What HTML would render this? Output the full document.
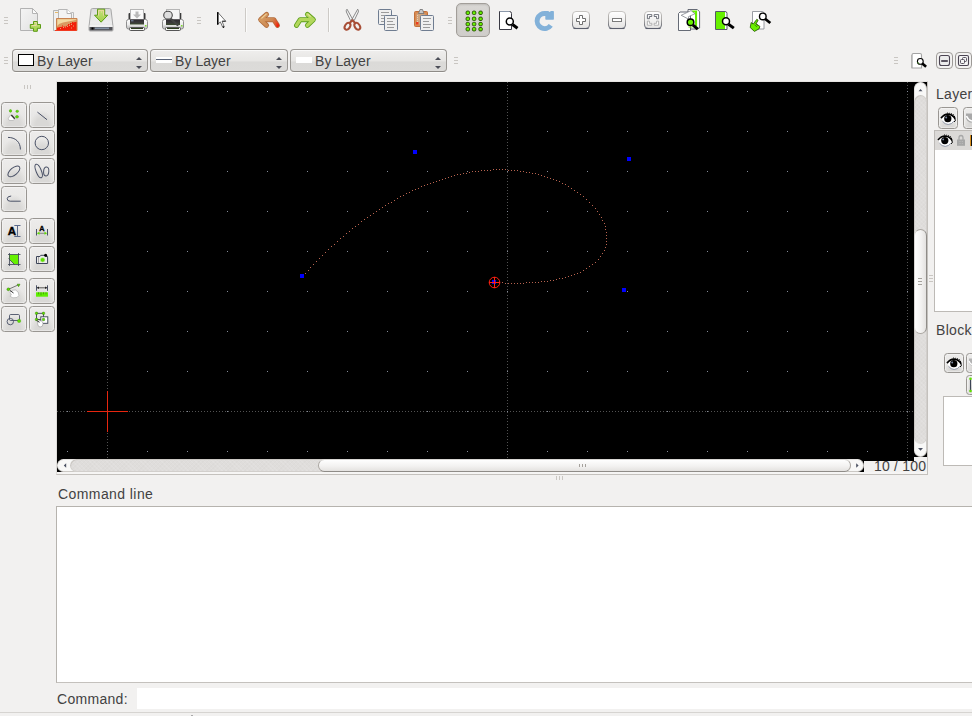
<!DOCTYPE html>
<html><head><meta charset="utf-8"><title>LibreCAD</title>
<style>
*{box-sizing:border-box;margin:0;padding:0}
html,body{width:972px;height:716px;overflow:hidden;background:#f2f1f0}
body{position:relative;font-family:"Liberation Sans",sans-serif;font-size:14px;color:#424242}
.a{position:absolute}
.t{position:absolute;white-space:nowrap;line-height:16px;letter-spacing:.3px}
/* generic raised button */
.b{position:absolute;border:1px solid #999692;border-radius:3.500px;background:radial-gradient(ellipse 50% 68% at 50% 100%,#d9d8d6 55%,rgba(217,216,214,0) 100%),linear-gradient(#edeceb,#e4e3e1);box-shadow:inset 0 0 0 1px rgba(255,255,255,.35)}
.hd{position:absolute;width:4px;height:8px;background:linear-gradient(#c9c6c2 0 0) 0 0/5px 1px no-repeat,linear-gradient(#c9c6c2 0 0) 0 3px/5px 1px no-repeat,linear-gradient(#c9c6c2 0 0) 0 6px/5px 1px no-repeat}
.vd{position:absolute;width:8px;height:5px;background:linear-gradient(#c9c6c2 0 0) 0 0/1px 5px no-repeat,linear-gradient(#c9c6c2 0 0) 3px 0/1px 5px no-repeat,linear-gradient(#c9c6c2 0 0) 6px 0/1px 5px no-repeat}
.cb{position:absolute;top:49px;height:23px;border:1px solid #9a9793;border-bottom-color:#8e8b87;border-radius:4px;background:linear-gradient(#efeeed,#e7e6e4 50%,#dbdad8 58%,#dcdbd9);box-shadow:inset 0 1px 0 rgba(255,255,255,.7),0 1px 0 #fbfbfa}
.cb span{position:absolute;top:3px;line-height:16px;letter-spacing:.05px}
.cb i{position:absolute;right:5.500px;width:0;height:0;border-left:3px solid transparent;border-right:3px solid transparent}
.cb i.u{top:6.500px;border-bottom:3.600px solid #4c4e58}
.cb i.d{top:15.500px;border-top:3.600px solid #4c4e58}
svg{position:absolute;overflow:visible}
</style></head><body>

<!-- ===== top toolbar ===== -->
<div class="hd" style="left:4px;top:17px"></div>
<div class="hd" style="left:197px;top:17px"></div>
<div class="hd" style="left:448px;top:17px"></div>
<div class="a" style="left:245px;top:8px;width:1px;height:24px;background:#cdcac6"></div>
<div class="a" style="left:246px;top:8px;width:1px;height:24px;background:#fbfbfa"></div>
<div class="a" style="left:328px;top:8px;width:1px;height:24px;background:#cdcac6"></div>
<div class="a" style="left:329px;top:8px;width:1px;height:24px;background:#fbfbfa"></div>
<div class="a" style="left:456px;top:3px;width:34px;height:34px;border:1px solid #a29e99;border-radius:5px;background:linear-gradient(#d9d7d4,#cfcdca);box-shadow:inset 0 1px 2px rgba(0,0,0,.12)"></div>
<svg style="left:0;top:0" width="972" height="40" viewBox="0 0 972 40">
<defs>
<linearGradient id="pg" x1="0" y1="0" x2="1" y2="1"><stop offset="0" stop-color="#f4f4f4"/><stop offset="1" stop-color="#e2e2e2"/></linearGradient>
<linearGradient id="gr" x1="0" y1="0" x2="0" y2="1"><stop offset="0" stop-color="#c3e27a"/><stop offset="1" stop-color="#a3d04a"/></linearGradient>
<linearGradient id="fo" x1="0" y1="0" x2="0" y2="1"><stop offset="0" stop-color="#f3dfa8"/><stop offset=".35" stop-color="#e5b074"/><stop offset=".55" stop-color="#dc8a55"/><stop offset=".8" stop-color="#ee3a1c"/><stop offset="1" stop-color="#f41d0c"/></linearGradient>
<linearGradient id="dr" x1="0" y1="0" x2="0" y2="1"><stop offset="0" stop-color="#dadada"/><stop offset=".6" stop-color="#ededed"/><stop offset="1" stop-color="#e0e0e0"/></linearGradient>
<linearGradient id="pr" x1="0" y1="0" x2="0" y2="1"><stop offset="0" stop-color="#fdfdfd"/><stop offset=".55" stop-color="#ececec"/><stop offset=".72" stop-color="#d2d2d2"/><stop offset="1" stop-color="#c4c4c4"/></linearGradient>
<linearGradient id="ud" x1="0" y1="0" x2="1" y2="0"><stop offset="0" stop-color="#dba466"/><stop offset=".6" stop-color="#cf8553"/><stop offset=".8" stop-color="#e2502c"/><stop offset="1" stop-color="#f41d0c"/></linearGradient>
<linearGradient id="zb" x1="0" y1="0" x2="0" y2="1"><stop offset="0" stop-color="#ffffff"/><stop offset="1" stop-color="#e4e3e2"/></linearGradient>
<linearGradient id="ud2" gradientUnits="userSpaceOnUse" x1="258" y1="14" x2="280" y2="26"><stop offset="0" stop-color="#d9a468"/><stop offset=".62" stop-color="#cc8752"/><stop offset=".8" stop-color="#e2552c"/><stop offset=".92" stop-color="#f41d0c"/></linearGradient>
<linearGradient id="zs" x1="0" y1="0" x2="0" y2="1"><stop offset="0" stop-color="#c6c4c1"/><stop offset=".5" stop-color="#a9a7a5"/><stop offset="1" stop-color="#5a5e6c"/></linearGradient>
<linearGradient id="sl" x1="0" y1="0" x2="0" y2="1"><stop offset="0" stop-color="#2f2a31"/><stop offset=".6" stop-color="#3a3a3a"/><stop offset="1" stop-color="#3c4c2e"/></linearGradient>
</defs>
<!-- new -->
<g>
<path d="M20.5 8.5h12l5 5v17h-17z" fill="url(#pg)" stroke="#b2b2b2"/>
<path d="M32.5 8.5v5h5z" fill="#fbfbfb" stroke="#b4b4b4" stroke-linejoin="round"/>
<path d="M33.500 21.500h3.800v3h3.200v3.800h-3.200v3h-3.800v-3h-3.200v-3.800h3.200z" fill="url(#gr)" stroke="#5c9c14" stroke-linejoin="round"/>
<path d="M34.500 22.500h1.800v3h-4.500" fill="none" stroke="#ecd6a6" stroke-width="1"/>
</g>
<!-- open -->
<g>
<path d="M53.500 10.500h5.500v20h-5.500z" fill="#f0f0f0" stroke="#b4b4b4"/>
<path d="M55 12.500h3" stroke="#e5b96a"/>
<path d="M71.500 12.500h2v18h-2z" fill="#f2f2f2" stroke="#bababa"/>
<path d="M58.500 9.500h8.500l4.500 4v17h-13z" fill="#f3f3f3" stroke="#b6b6b6"/>
<path d="M67 9.500v4h4.500" fill="#fff" stroke="#b4b4b4"/>
<path d="M56.500 18.500h20.500v12h-20.500z" fill="#da9a62" stroke="#c98250"/>
<path d="M57.300 19.300h18.900v.5l-4.200.9l-4 .9l-5 1l-4 1.400l-1.700 2z" fill="#f1dba4"/>
<path d="M57 30.300v-2.500l3-.8l3-.3l3-.5l4-2l3-1.600l3.500-.8v8.500z" fill="#f21e0a"/>
<g fill="#f21e0a"><rect x="68" y="24" width="1" height="1"/><rect x="70" y="23" width="1" height="1"/><rect x="72" y="22" width="1" height="1"/><rect x="62" y="25.500" width="1" height="1"/></g>
<g fill="#e9a070"><rect x="63" y="27" width="1" height="1"/><rect x="65" y="26.500" width="1" height="1"/><rect x="67" y="26" width="1" height="1"/><rect x="69" y="25" width="1" height="1"/><rect x="71" y="24" width="1" height="1"/><rect x="73" y="25.500" width="1" height="1"/><rect x="71" y="27.500" width="1" height="1"/><rect x="60" y="28" width="1" height="1"/></g>
<path d="M55 30.500h21.500" stroke="#f23a20" stroke-width="1"/>
</g>
<!-- save / drive -->
<g>
<path d="M93 8.500h16.500q1.300 0 1.500 1.200l2 16.800v3.500q0 1-1 1h-22q-1 0-1-1v-3.500l2-16.800q.2-1.200 1.500-1.200z" fill="url(#dr)" stroke="#a9a9a9"/>
<path d="M89.500 27h23v2.700q0 .8-.8.800h-21.400q-.8 0-.8-.800z" fill="#55555a"/>
<path d="M89.500 26h23" stroke="#fafafa"/>
<rect x="91.500" y="27.500" width="2" height="2" fill="#000"/>
<path d="M95 28.300h14" stroke="#8593a5" stroke-width="1.600"/>
<path d="M97.500 9.200h7.200v6h3l-6.600 7l-6.600-7h3z" fill="url(#gr)" stroke="#5c9c14" stroke-linejoin="round"/>
<path d="M98.600 15.600v-5.300h5v5.300" fill="none" stroke="#f0d7a0" stroke-width="1"/><rect x="101" y="11.500" width="1" height="1" fill="#f0d7a0"/>
</g>
<!-- print -->
<g>
<rect x="128.500" y="13" width="17" height="8" rx="1" fill="#3a3a3a"/>
<rect x="130.500" y="9.500" width="13" height="11" fill="#fafafa" stroke="#b5b5b5"/>
<path d="M135.500 11.500h3v3h2.500l-4 4l-4-4h2.500z" fill="#b9b9b9"/>
<rect x="126.500" y="19.500" width="21" height="9.500" rx="2" fill="url(#pr)" stroke="#8e8e8e"/>
<rect x="130" y="19.500" width="14" height="5" fill="url(#sl)"/>
<path d="M131 20.800h2.500" stroke="#8190ae" stroke-width="1"/>
<rect x="129.500" y="27.500" width="15" height="3" rx="1" fill="#f4f4f4" stroke="#555"/>
<path d="M131 28.500h12" stroke="#2c3d1c" stroke-width="1"/>
<rect x="145" y="25" width="1.500" height="1.500" fill="#7be02a"/>
</g>
<!-- print preview -->
<g>
<rect x="176" y="13" width="5.300" height="8" fill="#3a3a3a"/>
<rect x="166.500" y="9.500" width="13" height="11" fill="#f6f6f6" stroke="#b5b5b5"/>
<rect x="162.500" y="19.500" width="21" height="9.500" rx="2" fill="url(#pr)" stroke="#8e8e8e"/>
<rect x="166" y="19.500" width="14" height="5.500" fill="url(#sl)"/>
<rect x="165.500" y="27.500" width="15" height="3" rx="1" fill="#f4f4f4" stroke="#555"/>
<path d="M167 28.500h12" stroke="#2c3d1c" stroke-width="1"/>
<rect x="181" y="25" width="1.500" height="1.500" fill="#7be02a"/>
<path d="M171 19l6.500 6" stroke="#444" stroke-width="2.200" stroke-linecap="round"/>
<ellipse cx="168" cy="15.200" rx="4.300" ry="3.900" fill="#dedede" stroke="#4a4a4a" stroke-width="1.100"/>
</g>
<!-- cursor -->
<path d="M217.500 12v12.800l2.800-3l2.400 5.400q.9.600 1.500-.3l-2.100-5.600h3.700z" fill="#fff" stroke="#3a3a3a" stroke-width=".7" stroke-linejoin="round"/><path d="M222.300 21.200h3.300" stroke="#222" stroke-width=".9"/><circle cx="223.500" cy="27.100" r=".8" fill="#000"/>
<path d="M217.800 12.300v12.200" stroke="#000" stroke-width="1.500"/>
<!-- undo -->
<g fill="none" stroke-linecap="round" stroke-linejoin="round">
<path d="M266.600 14.400L260.600 19.700L266.600 25.400M262 19.700H273.800L277.500 25.400" stroke="#b26d3c" stroke-width="4.900"/>
<path d="M266.600 14.400L260.600 19.700L266.600 25.400M262 19.700H273.800L277.500 25.400" stroke="url(#ud2)" stroke-width="3.300"/>
<path d="M266.200 14.200L261.800 18.100" stroke="#f0d49a" stroke-width="1.100"/>
</g>
<!-- redo -->
<g fill="none" stroke-linecap="round" stroke-linejoin="round">
<path d="M307.400 14.400L313.400 19.700L307.400 25.400M312 19.700H300.200L296.500 25.400" stroke="#5e9f1c" stroke-width="4.900"/>
<path d="M307.400 14.400L313.400 19.700L307.400 25.400M312 19.700H300.200L296.500 25.400" stroke="#b3d75c" stroke-width="3.300"/>
<path d="M307.800 14.200L310.300 16.400" stroke="#e4dfa0" stroke-width="1.100"/>
</g>
<!-- cut -->
<g>
<path d="M347 9.200q-1.200 1.300-.6 2.800l4.100 8.500l2 -1.500z" fill="#f4f4f4" stroke="#707070" stroke-linejoin="round" stroke-width=".8"/>
<path d="M357.700 9.200q1.200 1.300 .6 2.800l-4.100 8.500l-2 -1.500z" fill="#f4f4f4" stroke="#707070" stroke-linejoin="round" stroke-width=".8"/>
<ellipse cx="347.500" cy="26.300" rx="2.500" ry="3.700" fill="none" stroke="#a84e36" stroke-width="2" transform="rotate(32 347.500 26.300)"/>
<ellipse cx="357.300" cy="26.300" rx="2.500" ry="3.700" fill="none" stroke="#a84e36" stroke-width="2" transform="rotate(-32 357.300 26.300)"/>
<path d="M349.300 23.300l3.100-3l3.100 3" fill="none" stroke="#a84e36" stroke-width="2.200" stroke-linejoin="round"/>
</g>
<!-- copy -->
<g>
<rect x="378.500" y="9.500" width="13" height="15" rx="1" fill="#efefef" stroke="#6f7d91"/>
<path d="M381 12.500h8M381 15.500h6M381 18.500h7M381 21.500h5" stroke="#9b9b9b"/>
<rect x="384.500" y="15.500" width="13" height="15" rx="1" fill="#efefef" stroke="#6f7d91"/>
<path d="M387 18.500h8M387 21.500h6M387 24.500h8M387 27.500h7" stroke="#9b9b9b"/>
</g>
<!-- paste -->
<g>
<rect x="414.500" y="11.500" width="13" height="15" rx="1" fill="#d98a50" stroke="#c2703a"/>
<rect x="416.500" y="13.500" width="9" height="11" fill="#cfa47e"/>
<path d="M417.500 15v9" stroke="#e8cdb2" stroke-dasharray="1 1"/>
<rect x="416" y="22" width="2.500" height="2.500" fill="#ef3a1c"/>
<path d="M418.500 13.500l1.500-4h2.500l1.500 4z" fill="#c9c9c9" stroke="#707070" stroke-width=".8"/>
<rect x="420.500" y="15.500" width="13" height="15" rx="1" fill="#efefef" stroke="#6f7d91"/>
<path d="M423 18.500h8M423 21.500h6M423 24.500h8M423 27.500h7" stroke="#9b9b9b"/>
</g>
<!-- grid -->
<g fill="#66f000" stroke="#2a5206" stroke-width="1">
<rect x="466.10" y="11.10" width="3.4" height="3.4" rx="1.1"/><rect x="472.40" y="11.10" width="3.4" height="3.4" rx="1.1"/><rect x="478.90" y="11.10" width="3.4" height="3.4" rx="1.1"/>
<rect x="466.10" y="17.10" width="3.4" height="3.4" rx="1.1"/><rect x="472.40" y="17.10" width="3.4" height="3.4" rx="1.1"/><rect x="478.90" y="17.10" width="3.4" height="3.4" rx="1.1"/>
<rect x="466.10" y="22.40" width="3.4" height="3.4" rx="1.1"/><rect x="472.40" y="22.40" width="3.4" height="3.4" rx="1.1"/><rect x="478.90" y="22.40" width="3.4" height="3.4" rx="1.1"/>
<rect x="466.10" y="27.50" width="3.4" height="3.4" rx="1.1"/><rect x="472.40" y="27.50" width="3.4" height="3.4" rx="1.1"/><rect x="478.90" y="27.50" width="3.4" height="3.4" rx="1.1"/>
</g>
<!-- zoom redraw -->
<g>
<path d="M499.500 11.500h10q2 0 2 2v16h-12z" fill="#fff" stroke="#3a3a44"/>
<path d="M500 11.500h9.500" stroke="#8b98aa"/>
<circle cx="509.800" cy="21.500" r="3.500" fill="#fff" stroke="#000" stroke-width="1.500"/>
<path d="M512.500 24.500l5 3.800" stroke="#000" stroke-width="3"/>
</g>
<!-- refresh -->
<path d="M552.800 26.700A10 10 0 1 1 546.300 11.100L548.300 11.100L549.500 12L551 11L553.200 11Q553.900 11 553.900 11.700L553.900 19Q553.900 19.700 553.200 19.700L546 19.700Q545.300 19.700 545.300 19L545.300 16.050A5 5 0 1 0 548.700 23.900Z" fill="#82b1d9"/>
<!-- zoom in -->
<g>
<rect x="572.500" y="11.500" width="17" height="17" rx="3.500" fill="url(#zb)" stroke="url(#zs)"/>
<path d="M573.500 28.500h15" stroke="#5a5e6c" stroke-width="1.100"/>
<path d="M579.500 15.500h3v3h3v3h-3v3h-3v-3h-3v-3h3z" fill="#fff" stroke="#6f6f6f"/>
</g>
<!-- zoom out -->
<g>
<rect x="608.500" y="11.500" width="17" height="17" rx="3.500" fill="url(#zb)" stroke="url(#zs)"/>
<path d="M609.500 28.500h15" stroke="#5a5e6c" stroke-width="1.100"/>
<rect x="612.500" y="18.500" width="9" height="3" fill="#fff" stroke="#7a7a7a"/>
</g>
<!-- zoom auto -->
<g>
<rect x="644.500" y="11.500" width="17" height="17" rx="3.500" fill="url(#zb)" stroke="url(#zs)"/>
<path d="M645.500 28.500h15" stroke="#5a5e6c" stroke-width="1.100"/>
<path d="M647.400 14.600h4.400v1.900h-2.400v2.200h-2zM658.600 14.600h-4.400v1.900h2.400v2.200h2z" fill="#fff" stroke="#4c505c" stroke-width=".8"/>
<path d="M647.400 25.200h4.400v-1.900h-2.400v-2.200h-2zM658.600 25.200h-4.400v-1.900h2.400v-2.200h2z" fill="#fff" stroke="#a2a2a2" stroke-width=".8"/>
</g>
<!-- zoom previous -->
<g>
<path d="M688 9.500h9.300l2.300 2.300v16.200l-2.500 1h-9.100z" fill="#fff" stroke="#555a66" stroke-width=".9"/>
<path d="M691.500 10.500h5.600v15.700h-2.100v-13.600h-3.500z" fill="#66f000"/>
<path d="M680 12h8.500l2 .5v18h-12v-17z" fill="#fff" stroke="#555a66" stroke-width=".9" stroke-linejoin="round"/>
<path d="M681.200 15.300L691 10.600L695 13.700L688.300 16.800L689.300 19.500Z" fill="#fff" stroke="#70747c" stroke-width=".7" stroke-linejoin="round"/>
<circle cx="690.500" cy="22.200" r="3.300" fill="#66f000" stroke="#000" stroke-width="1.500"/>
<path d="M688.500 27h4" stroke="#8ad23a" stroke-width="1.200"/>
<path d="M693 25.200l4.800 4" stroke="#000" stroke-width="3"/>
</g>
<!-- zoom window -->
<g>
<path d="M715.500 11.500h9.500q2 0 2 2v16h-11.500z" fill="#fff" stroke="#555a66"/>
<rect x="716" y="12" width="9" height="17" fill="#66f000"/>
<circle cx="726" cy="21.300" r="3.500" fill="#fff" stroke="#000" stroke-width="1.500"/>
<path d="M728.500 24.300l5.300 3.800" stroke="#000" stroke-width="3"/>
</g>
<!-- zoom pan -->
<g>
<path d="M752.500 11.500h9.500q2 0 2 2v15.500h-11.500z" fill="#fff" stroke="#8f9298" stroke-width=".9"/>
<path d="M750.200 27.500l1-5l2 1.600l3.600-4.800l1.300 .9l-2 3.600l3.800 2.600l-.8 2.400l-4.700 2.600z" fill="#6af000" stroke="#1f4a00" stroke-width=".8" stroke-linejoin="round"/><path d="M755.500 23.500l2.500 2M754.500 24.800l2.500 2" stroke="#1f4a00" stroke-width=".6"/>
<circle cx="762.800" cy="16.400" r="3.300" fill="#fff" stroke="#000" stroke-width="1.400"/>
<path d="M765.300 19l5 4" stroke="#000" stroke-width="2.800"/>
</g>
</svg>


<!-- ===== second toolbar ===== -->
<div class="hd" style="left:4px;top:57px"></div>
<div class="cb" style="left:12px;width:136px"><div class="a" style="left:5px;top:4px;width:16px;height:12px;background:#fff;border:1px solid #000"></div><span style="left:24px">By Layer</span><i class="u"></i><i class="d"></i></div>
<div class="cb" style="left:150px;width:138px"><div class="a" style="left:5px;top:7px;width:16px;height:6px;background:linear-gradient(#fff 0 2px,#5a6478 2px 3px,#fff 3px)"></div><span style="left:24px">By Layer</span><i class="u"></i><i class="d"></i></div>
<div class="cb" style="left:290px;width:157px"><div class="a" style="left:5px;top:7px;width:16px;height:6px;background:#fff"></div><span style="left:24px">By Layer</span><i class="u"></i><i class="d"></i></div>
<div class="hd" style="left:454px;top:57px"></div>
<div class="hd" style="left:894px;top:57px"></div>

<!-- ===== left palette ===== -->
<style>.pb{position:absolute;width:26px;height:26px;border:1px solid #999692;border-radius:3.500px;background:radial-gradient(ellipse 50% 68% at 50% 100%,#d9d8d6 55%,rgba(217,216,214,0) 100%),linear-gradient(#edeceb,#e4e3e1);box-shadow:inset 0 0 0 1px rgba(255,255,255,.35)}</style><div class="pb" style="left:1px;top:102px"></div>
<div class="pb" style="left:29px;top:102px"></div>
<div class="pb" style="left:1px;top:130px"></div>
<div class="pb" style="left:29px;top:130px"></div>
<div class="pb" style="left:1px;top:158px"></div>
<div class="pb" style="left:29px;top:158px"></div>
<div class="pb" style="left:1px;top:186px"></div>
<div class="pb" style="left:1px;top:218px"></div>
<div class="pb" style="left:29px;top:218px"></div>
<div class="pb" style="left:1px;top:246px"></div>
<div class="pb" style="left:29px;top:246px"></div>
<div class="pb" style="left:1px;top:278px"></div>
<div class="pb" style="left:29px;top:278px"></div>
<div class="pb" style="left:1px;top:306px"></div>
<div class="pb" style="left:29px;top:306px"></div>
<div class="vd" style="left:24px;top:85px;height:4px"></div>
<svg style="left:0;top:80px" width="57" height="260" viewBox="0 80 57 260">
<g fill="none" stroke="#4a5166" stroke-width="1">
<!-- line -->
<path d="M37.400 112.100l9.600 7.600"/>
<!-- arc -->
<path d="M8 137.400C15.500 137.400 20.400 142 20.400 149.500"/>
<!-- circle -->
<circle cx="41.800" cy="143" r="6.700"/>
<!-- ellipse -->
<ellipse cx="13.900" cy="171.400" rx="7.200" ry="3.600" transform="rotate(-40 13.900 171.400)"/>
<!-- two ellipses -->
<ellipse cx="38.700" cy="171" rx="2.600" ry="7.200" transform="rotate(-22 38.700 171)"/>
<ellipse cx="46.200" cy="171.500" rx="2.600" ry="4.400" transform="rotate(5 46.200 171.500)"/>
<!-- polyline -->
<path d="M11.200 196q-4 .300-4 2.700q0 2.500 3 2.500h10.500"/>
</g>
<!-- points icon -->
<g>
<ellipse cx="10.500" cy="110.900" rx="1.200" ry="1.300" fill="#5fe000" stroke="#3f9a08" stroke-width=".5"/>
<ellipse cx="17.200" cy="111.300" rx="1.400" ry="1.100" fill="#5fe000" stroke="#3f9a08" stroke-width=".5"/>
<ellipse cx="17" cy="116.800" rx="1.500" ry="1.200" fill="#5fe000" stroke="#3f9a08" stroke-width=".5"/>
<path d="M8.300 118.500l2.200-3.300l2.300.3l2 3.400l-1.700 1.600h-3.800z" fill="#fff" stroke="#999" stroke-width=".5"/>
<path d="M11.300 115l3.400 3.800" stroke="#333" stroke-width="1.300"/>
</g>
<!-- text icon -->
<text x="7.800" y="234.900" font-family="Liberation Sans" font-weight="bold" font-size="11.500" fill="#000" stroke="#000" stroke-width=".4">A</text>
<path d="M14.300 225.500h6.200M14.300 236.500h6.200M17.500 225.500v11" stroke="#5a6a8c" stroke-width="1" fill="none"/>
<!-- dim icon -->
<text x="39.300" y="230.700" font-family="Liberation Sans" font-weight="bold" font-size="7.300" fill="#000" stroke="#000" stroke-width=".3">A</text>
<path d="M36.500 229v6.500M47.500 229v6.500" stroke="#4a5166" stroke-width="1"/>
<path d="M38 233.300h8" stroke="#888" stroke-width="1"/>
<path d="M36.800 233.300l2.700-1.500v3zM47.200 233.300l-2.700-1.500v3z" fill="#5fe000"/>
<!-- hatch -->
<path d="M9 254.400h9.600v9.900h-4.400l-5.200-5z" fill="#66f000"/>
<path d="M8 254.500h12.500M8 264.500h12.500M9.500 253v13M18.500 253v13M8.500 258.500l6 6" stroke="#3c4454" stroke-width=".8" fill="none"/>
<!-- camera -->
<path d="M36.500 256.500h3.500l.8-1.200h4l.8 1.200h2v7h-11.100z" fill="#ecebea" stroke="#3c4458" stroke-width="1"/>
<ellipse cx="42.600" cy="259.900" rx="2.500" ry="2.300" fill="#5fe000" stroke="#e8e8e8" stroke-width=".6"/>
<circle cx="45.600" cy="255.200" r="1.500" fill="#000"/>
<path d="M38.500 257v6" stroke="#777" stroke-width=".6"/>
<!-- modify hand -->
<path d="M8.700 289.200l9.600-4.300" stroke="#444" stroke-width=".7"/>
<circle cx="8.400" cy="289.300" r="1.400" fill="#5fe000" stroke="#2c6c06" stroke-width=".5"/>
<path d="M17.200 284.200h2.800l-1.400 2.500z" fill="#5fe000" stroke="#2c6c06" stroke-width=".5"/>
<path d="M10 292.500l2-2.200l3.500-.3l2.600 2l.8 3.500l-2 2l-4 .3l-3-1.600l1.500-1.200z" fill="#fff" stroke="#999" stroke-width=".5"/>
<path d="M10 290.500l3.500 2.500" stroke="#333" stroke-width="1"/>
<!-- measure -->
<path d="M36.500 285.300v5.500M47.500 285.300v5.500" stroke="#4a5166" stroke-width="1"/>
<path d="M37 287.800h10" stroke="#333" stroke-width=".8"/>
<path d="M36.800 287.800l2.200-1.300v2.600zM47.200 287.800l-2.200-1.300v2.600z" fill="#222"/>
<rect x="36" y="292.300" width="12" height="4.400" fill="#5ff000"/>
<path d="M38.500 292.300v2M41 292.300v3M43.500 292.300v2M46 292.300v2" stroke="#3a8a06" stroke-width=".7"/>
<!-- block -->
<rect x="9.500" y="314.500" width="10" height="6" rx="1.200" fill="none" stroke="#4a5166" stroke-width=".9"/>
<circle cx="10.300" cy="321.600" r="3.200" fill="none" stroke="#4a5166" stroke-width=".9"/>
<rect x="17.600" y="319.400" width="3" height="3" rx="1" fill="#5fe000" stroke="#3f9a08" stroke-width=".4"/>
<!-- select -->
<rect x="36.500" y="313.300" width="7" height="6.200" fill="none" stroke="#3c4454" stroke-width=".9"/>
<rect x="40.800" y="316.800" width="7" height="6.500" fill="#fff" stroke="#3c4454" stroke-width=".9"/>
<g fill="#5fe000" stroke="#2c6c06" stroke-width=".4"><rect x="35.300" y="312.100" width="2.400" height="2.400" rx=".8"/><rect x="42.300" y="312.100" width="2.400" height="2.400" rx=".8"/><rect x="35.300" y="318.300" width="2.400" height="2.400" rx=".8"/><rect x="42.300" y="318.300" width="2.400" height="2.400" rx=".8"/></g>
<path d="M37.500 322.500l2-1.800l2.500.4l1 2.500l-.6 2.500l-2.400 1l-2-1.500z" fill="#fff" stroke="#888" stroke-width=".5"/>
<path d="M36.500 320.500l3 1.800" stroke="#333" stroke-width="1"/>
</svg>


<!-- ===== canvas ===== -->
<div class="a" style="left:56px;top:81px;width:872px;height:394px;border:1px solid #c4c1bd;border-top-color:#e6e4e2;border-left-color:#dedcd9"></div>
<div class="a" id="cv" style="left:57px;top:82px;width:870px;height:390px;background:#000;overflow:hidden">
<svg width="870" height="390" viewBox="0 0 870 390" shape-rendering="crispEdges">
<defs><pattern id="g" x="10" y="9" width="40" height="40" patternUnits="userSpaceOnUse"><rect width="1" height="1" fill="#858b99"/></pattern></defs>
<g stroke="#525252" stroke-width="1" stroke-dasharray="1 2">
<path d="M50.5 0v379M450.5 0v379M850.5 0v379"/>
<path d="M0 329.5h857"/>
</g>
<rect width="857" height="379" fill="url(#g)"/>
<path stroke="#e8260f" stroke-width="1" d="M30 329.5h41M50.5 309v41" fill="none"/>
<path id="curve" stroke="#b8634f" stroke-width="1" fill="none" d="M245 194h1M248 191h1M251 188h1M253 185h1M256 182h1M259 179h1M262 176h1M265 173h1M268 170h1M271 167h1M274 164h1M277 162h1M280 159h1M283 156h1M286 154h1M289 151h1M292 149h1M295 146h1M298 144h1M301 142h1M304 139h1M307 137h1M310 135h1M313 133h1M316 131h1M319 129h1M322 127h1M325 125h1M328 123h1M331 121h1M334 120h1M337 118h1M340 116h1M343 114h1M346 113h1M349 111h1M352 110h1M355 108h1M358 107h1M361 106h1M364 104h1M367 103h1M370 102h1M373 101h1M376 100h1M379 99h1M382 98h1M385 97h1M388 96h1M391 95h1M394 94h1M397 93h1M400 92h1M403 92h1M406 91h1M409 91h1M412 90h1M415 89h1M418 89h1M421 89h1M424 88h1M427 88h1M430 88h1M433 88h1M436 87h1M439 87h1M442 87h1M445 87h1M448 87h1M451 88h1M454 88h1M457 88h1M460 88h1M463 89h1M466 89h1M469 90h1M472 90h1M475 91h1M478 91h1M481 92h1M484 93h1M487 94h1M490 95h1M493 96h1M496 97h1M499 98h1M502 99h1M505 101h1M508 102h1M511 104h1M514 106h1M517 108h1M520 110h1M523 112h1M526 114h1M529 117h1M532 120h1M535 123h1M538 126h1M540 129h1M542 132h1M544 135h1M545 138h1M547 141h1M548 144h1M548 147h1M549 150h1M549 153h1M549 156h1M549 159h1M549 162h1M548 165h1M547 168h1M545 171h1M543 174h1M541 177h1M538 180h1M535 182h1M532 184h1M529 186h1M526 188h1M523 190h1M520 191h1M517 192h1M514 193h1M511 194h1M508 195h1M505 196h1M502 196h1M499 197h1M496 198h1M493 198h1M490 199h1M487 199h1M484 199h1M481 200h1M478 200h1M475 200h1M472 200h1M469 200h1M466 201h1M463 201h1M460 201h1M457 201h1M454 201h1M451 201h1M448 201h1M445 200h1M442 200h1M439 200h1" transform="translate(0 .5)"/>
<g fill="#0000ff"><rect x="243" y="192" width="4" height="4"/><rect x="356" y="68" width="4" height="4"/><rect x="570" y="75" width="4" height="4"/><rect x="565" y="206" width="4" height="4"/><rect x="435" y="198" width="4" height="4"/></g>
<g stroke="#ff2010" fill="none" shape-rendering="auto"><circle cx="437.5" cy="200.5" r="5.3"/><path d="M432 200.5h11M437.5 195v11"/></g>
</svg>
</div>

<!-- scrollbars placeholder -->
<style>
.tr{position:absolute;background-color:#dfdddb;background-image:repeating-linear-gradient(45deg,rgba(255,255,255,.10) 0 1px,transparent 1px 3px),repeating-linear-gradient(-45deg,rgba(0,0,0,.015) 0 1px,transparent 1px 3px)}
.sl{position:absolute;border:1px solid #aaa6a1}
.ab{position:absolute;background:#f8f8f7;border:1px solid #d5d3d0}
</style>
<!-- vertical scrollbar -->
<div class="a" style="left:914px;top:457px;width:13px;height:15px;background:#f2f1f0"></div>
<div class="ab" style="left:914px;top:82px;width:13px;height:375px;border-radius:6.500px;border-color:#e4e2e0 #cbc8c4 #cbc8c4 #e4e2e0"></div>
<div class="tr" style="left:914px;top:95px;width:13px;height:349px;border-radius:6.500px;box-shadow:inset 1px 1px 0 #cac7c3,inset -1px 0 0 #d2cfcc"></div>
<div class="sl" style="left:914px;top:229px;width:13px;height:105px;border-radius:6.500px;border-right-color:#8f8c88;border-left-color:#d8d6d3;background:linear-gradient(90deg,#fefefe,#f3f2f1 55%,#e4e2e0)"></div>
<div class="hd" style="left:918px;top:278px;width:4px;--c:#9a9691;background:linear-gradient(#a5a19c 0 0) 0 0/5px 1px no-repeat,linear-gradient(#a5a19c 0 0) 0 3px/5px 1px no-repeat,linear-gradient(#a5a19c 0 0) 0 6px/5px 1px no-repeat"></div>
<svg style="left:914px;top:82px" width="13" height="375" viewBox="0 0 13 375"><path d="M4.500 9.300l2-2.300l2 2.300z" fill="#4b5162"/><path d="M4 366l2.500 2.800l2.500-2.800z" fill="#4b5162"/></svg>
<!-- label -->
<div class="a" style="left:864px;top:461px;width:50px;height:11px;background:#f2f1f0"></div>
<div class="a" style="left:57px;top:472px;width:870px;height:2px;background:#f6f5f4"></div>
<div class="t" style="left:874px;top:458px;letter-spacing:.2px">10 / 100</div>
<!-- horizontal scrollbar -->
<div class="ab" style="left:57px;top:459px;width:807px;height:13px;border-radius:6.500px;border-color:#e4e2e0 #cbc8c4 #cbc8c4 #e4e2e0"></div>
<div class="tr" style="left:70px;top:459px;width:781px;height:13px;border-radius:6.500px;box-shadow:inset 1px 1px 0 #cac7c3,inset 0 -1px 0 #d2cfcc"></div>
<div class="sl" style="left:318px;top:459px;width:533px;height:13px;border-radius:6.500px;border-bottom-color:#8f8c88;border-top-color:#d8d6d3;background:linear-gradient(#fefefe,#f3f2f1 55%,#e4e2e0)"></div>
<div class="vd" style="left:579px;top:464px;height:3px;background:linear-gradient(#a5a19c 0 0) 0 0/1px 4px no-repeat,linear-gradient(#a5a19c 0 0) 3px 0/1px 4px no-repeat,linear-gradient(#a5a19c 0 0) 6px 0/1px 4px no-repeat"></div>
<svg style="left:57px;top:459px" width="807" height="13" viewBox="0 0 807 13"><path d="M9.200 4.200l-2.400 2.300l2.400 2.300z" fill="#4b5162"/><path d="M799.200 4.200l2.400 2.300l-2.400 2.300z" fill="#4b5162"/></svg>


<!-- ===== right dock ===== -->
<!-- mdi buttons -->
<svg style="left:905px;top:46px" width="67" height="28" viewBox="905 46 67 28">
<path d="M912 55q0-1.500 1.500-1.500h6.500q1.500 0 1.500 1.500v13h-9.500z" fill="#fff" stroke="#a3a3a3" stroke-width="1.100"/>
<path d="M911.700 55v13" stroke="#a9a9a9" stroke-width=".8"/>
<circle cx="920.300" cy="61.400" r="2.900" fill="#fff" stroke="#000" stroke-width="1.100"/>
<path d="M919.300 64.200a3 3 0 0 1-1.700-2.200" stroke="#2a6a10" stroke-width="1" fill="none"/>
<path d="M922.300 63.500l3.800 3.300" stroke="#000" stroke-width="2.600"/>
<rect x="936.500" y="52.500" width="16" height="16" rx="3.500" fill="#f3f2f1" stroke="#9d9a97"/>
<rect x="939.500" y="55.500" width="10" height="10" rx="2" fill="#ececec" stroke="#4b4452" stroke-width="1.100"/>
<rect x="941.200" y="60.100" width="6.600" height="1.800" fill="#4b4452"/>
<rect x="955.500" y="52.500" width="16" height="16" rx="3.500" fill="#f3f2f1" stroke="#9d9a97"/>
<rect x="958.500" y="55.500" width="10" height="10" rx="1.500" fill="#f4f4f4" stroke="#4b4452" stroke-width="1.100"/>
<rect x="962.500" y="57.500" width="4" height="4" rx="1" fill="none" stroke="#4b4452" stroke-width=".9"/>
<rect x="960.500" y="59.500" width="4" height="4" rx="1" fill="#f4f4f4" stroke="#4b4452" stroke-width=".9"/>
</svg>
<!-- splitter handle -->
<div class="hd" style="left:929px;top:275px;width:4px"></div>
<!-- Layer dock -->
<div class="t" style="left:936px;top:86px">Layer List</div>
<div class="b" style="left:938px;top:107px;width:20px;height:22px"></div>
<div class="b" style="left:963px;top:107px;width:20px;height:22px"></div>
<div class="a" style="left:934px;top:130px;width:60px;height:182px;background:#fff;border:1px solid #bdbab6"></div>
<div class="a" style="left:935px;top:131px;width:40px;height:19px;background:#dbd9d7"></div>
<div class="a" style="left:970px;top:135px;width:4px;height:11px;background:#111;border-left:1px solid #d8901f"></div>
<!-- Block dock -->
<div class="t" style="left:936px;top:322px">Block List</div>
<div class="b" style="left:944px;top:353px;width:20px;height:20px"></div>
<div class="b" style="left:966px;top:353px;width:20px;height:20px"></div>
<div class="b" style="left:966px;top:375px;width:20px;height:20px"></div>
<div class="a" style="left:943px;top:396px;width:40px;height:70px;background:#fff;border:1px solid #bdbab6"></div>
<svg style="left:927px;top:100px" width="45" height="300" viewBox="927 100 45 300">
<defs>
<g id="eye">
<path d="M0 4.200q3-3.900 7-3.900q4.500 0 7.200 4.700q-2.500 5.300-7.200 5.400q-4.500-.5-7-6.200z" fill="#fff"/>
<path d="M1.500 7.500q2.500 3.200 5.700 3.200q3.600-.2 5.500-3.200" fill="none" stroke="#8a93a6" stroke-width=".9"/>
<circle cx="6.800" cy="4.900" r="3.600" fill="#000"/>
<path d="M0 4.300q3.200-4 7-4q4.600.2 7.200 4.600" fill="none" stroke="#000" stroke-width="1.700"/>
<path d="M10 .8l.5-1.300M11.700 1.700l.9-1.100M13 3l1-.8M13.800 4.800l.6 1.800l-1.200 1.600" stroke="#000" stroke-width="1" fill="none"/>
<path d="M6.500-.3v-1M8.300 0l.2-1" stroke="#000" stroke-width=".8"/>
<circle cx="5.200" cy="3.700" r=".95" fill="#7d88a2"/>
</g>
</defs>
<use href="#eye" x="941" y="113.800"/>
<use href="#eye" x="938" y="135.700"/>
<use href="#eye" x="947" y="358.800"/>
<!-- hidden-eye (gray) partially visible -->
<path d="M966 113.500h6v9h-2q-3-1-4-4z" fill="#a9a9a9"/>
<path d="M966.500 116q1.500 4 5.500 5" stroke="#fff" stroke-width="1.500" fill="none"/>
<path d="M969 358.500h3v7h-1q-1.500-1-2-3z" fill="#b3b3b3"/>
<path d="M969 361q1 3 3 3.500" stroke="#fff" stroke-width="1.300" fill="none"/>
<!-- lock -->
<path d="M959 140v-2.200a2 2.300 0 0 1 4 0v2.200" fill="none" stroke="#a7a7a7" stroke-width="1.300"/>
<rect x="957" y="139.500" width="8" height="6.300" fill="#a7a7a7"/>
<path d="M959.500 141.500h1M961.800 141.500h1M959.500 143.500h1M961.800 143.500h1" stroke="#bdbdbd" stroke-width="1"/>
<!-- block button 3 -->
<path d="M970.500 379v12" stroke="#3c4454" stroke-width="1.200"/>
<circle cx="970.500" cy="378.800" r="1.300" fill="#5fe000"/><circle cx="970.500" cy="391" r="1.300" fill="#5fe000"/>
</svg>


<!-- ===== command area ===== -->
<div class="vd" style="left:556px;top:476px;height:4px"></div>
<div class="t" style="left:58px;top:486px;letter-spacing:.42px">Command line</div>
<div class="a" style="left:56px;top:506px;width:930px;height:177px;background:#fff;border:1px solid #b6b3ae;border-bottom-color:#c4c1bd"></div>
<div class="t" style="left:57px;top:691px">Command:</div>
<div class="a" style="left:137px;top:688px;width:840px;height:21px;background:#fff"></div>
<div class="a" style="left:0;top:712px;width:972px;height:1px;background:#d6d4d1"></div>
<div class="a" style="left:191px;top:715px;width:2px;height:1px;background:#aaa"></div>
</body></html>
